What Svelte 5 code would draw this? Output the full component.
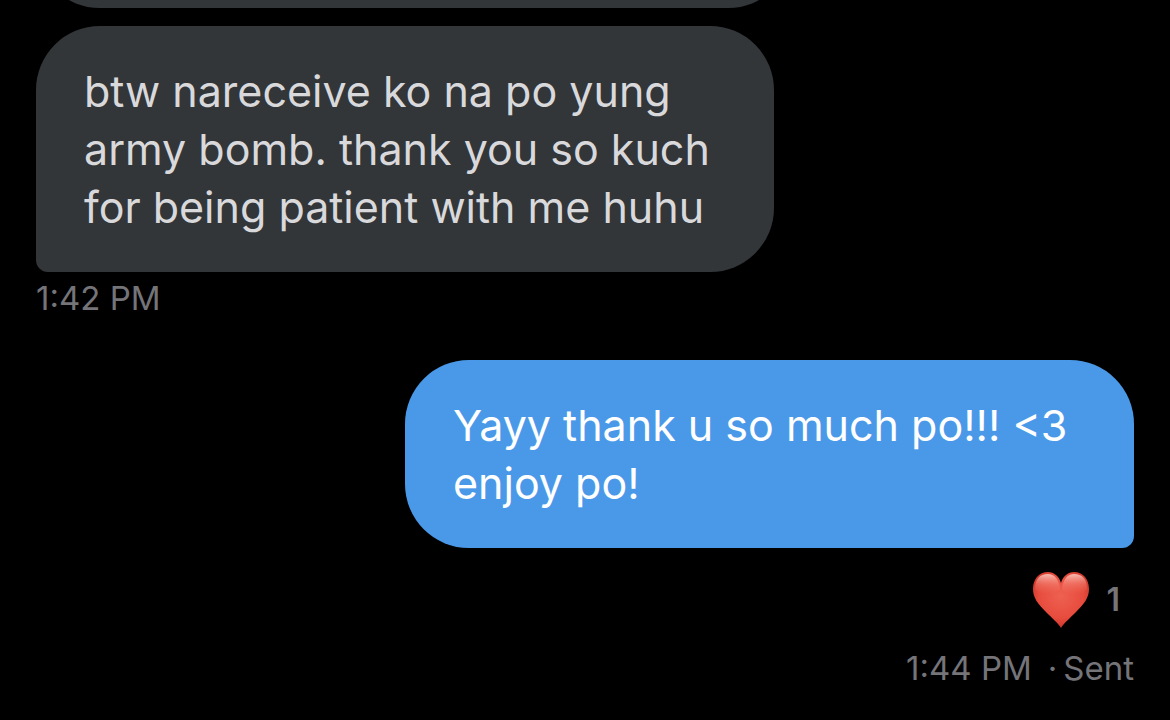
<script>
	const received = 'btw nareceive ko na po yung army bomb. thank you so kuch for being patient with me huhu';
	const sent = 'Yayy thank u so much po!!! <3 enjoy po!';
</script>

<main class="thread">
	<div class="bubble previous"></div>

	<section class="message">
		<p class="bubble received">{received}</p>
		<time class="meta">1:42 PM</time>
	</section>

	<section class="message own">
		<p class="bubble sent">{sent}</p>
		<button class="reaction" aria-label="Heart reaction, 1">
			<svg viewBox="0 0 58 56" width="58" height="56" aria-hidden="true">
				<defs>
					<radialGradient id="heart" gradientUnits="userSpaceOnUse" cx="29" cy="24" r="34">
						<stop offset="0" stop-color="#ee6152" />
						<stop offset="0.65" stop-color="#e74c3d" />
						<stop offset="1" stop-color="#c93127" />
					</radialGradient>
					<linearGradient id="gloss" x1="0" y1="0" x2="0" y2="1">
						<stop offset="0" stop-color="#ffd9d0" stop-opacity="0.8" />
						<stop offset="0.5" stop-color="#f9a093" stop-opacity="0.35" />
						<stop offset="1" stop-color="#f47868" stop-opacity="0" />
					</linearGradient>
				</defs>
				<path
					fill="url(#heart)"
					d="M29 56C26 51 20 46 14 40C6 32 1 26 1 17C1 7 7 0 16 0C22 0 27 4 29 11C31 4 36 0 42 0C51 0 57 7 57 17C57 26 52 32 44 40C38 46 32 51 29 56Z"
				/>
				<path fill="url(#gloss)" d="M3 17C3 7 8 2 16 2C22 2 27 7 28 17C22 24 8 24 3 17Z" />
				<path fill="url(#gloss)" d="M30 17C31 7 36 2 42 2C50 2 55 7 55 17C50 24 36 24 30 17Z" />
			</svg>
			<span>1</span>
		</button>
		<footer class="meta">
			<time>1:44 PM</time>
			<span class="status"><span>·</span><span>Sent</span></span>
		</footer>
	</section>
</main>

<style>
	:global(body) {
		margin: 0;
		background: #000;
	}

	/* newest message stays at the bottom, older ones run off the top */
	.thread {
		box-sizing: border-box;
		display: flex;
		flex-direction: column;
		justify-content: flex-end;
		height: 100vh;
		padding: 0 36px 32px;
		overflow: hidden;
		font-family: Inter, sans-serif;
	}

	.message {
		display: flex;
		flex-direction: column;
		flex-shrink: 0;
		align-items: flex-start;
		margin-top: 18px;
	}

	.own {
		align-items: flex-end;
		margin-top: 42px;
	}

	.bubble {
		box-sizing: border-box;
		max-width: 738px;
		margin: 0;
		padding: 36px 48px;
		border-radius: 64px;
		background: #333639;
		color: #d9d9dc;
		font-size: 43px;
		line-height: 58px;
	}

	.previous {
		flex-shrink: 0;
		max-width: 756px;
		height: 132px;
	}

	.received {
		border-bottom-left-radius: 12px;
	}

	.sent {
		max-width: 729px;
		border-bottom-right-radius: 12px;
		background: #4a99e9;
		color: #fff;
	}

	.meta {
		margin-top: 6px;
		color: #747479;
		font-size: 33px;
		line-height: 40px;
	}

	.own .meta {
		display: flex;
		gap: 16px;
		margin-top: 20px;
	}

	.status {
		display: flex;
		gap: 6px;
	}

	.reaction {
		display: flex;
		align-items: center;
		gap: 16px;
		margin-top: 24px;
		padding: 0 14px 0 0;
		border: 0;
		background: none;
		color: #747479;
		font: 600 32px/56px Inter, sans-serif;
	}
</style>
